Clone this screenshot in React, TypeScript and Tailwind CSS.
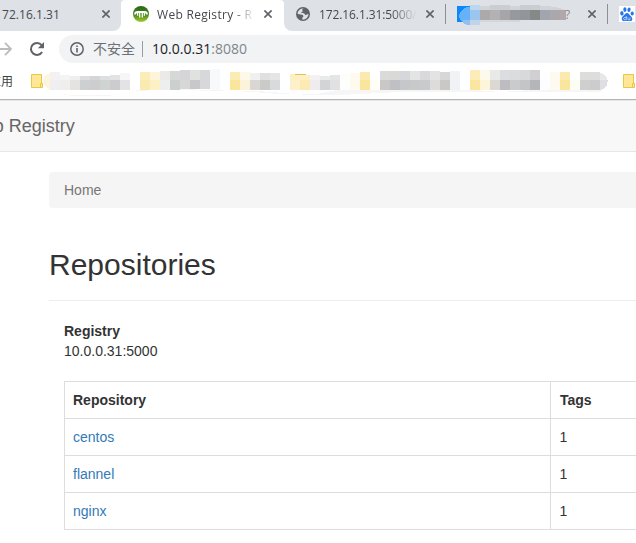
import React from "react";

type Cell = [x: number, y: number, top: string, bottom: string];

const bookmarkCells: Cell[] = [
  [50, 72, "#f4f1f2", "#efeff1"], [60, 75, "#f4f4f5", "#eeeeef"], [70, 76, "#eeeeef", "#e4e3e2"],
  [80, 76, "#dcdddf", "#cdd0d0"], [90, 76, "#d5d4d7", "#cdccce"], [100, 76, "#dde0e0", "#cfd3d2"],
  [110, 75, "#e3e2e4", "#cccbce"], [120, 73, "#f6f6f7", "#e3e3e6"],
  [140, 72, "#fbecb8", "#fbeab0"], [150, 72, "#fdf4da", "#fcf0c4"], [160, 71, "#ebeae9", "#eeeeee"],
  [170, 71, "#d6d8d8", "#cccfcf"], [180, 70, "#d5d4d7", "#d8d7d8"], [190, 70, "#e1e1e0", "#c8c7cb"],
  [200, 70, "#d6d8da", "#d6d8da"], [210, 69, "#f7f9fb", "#f8f9fa"],
  [230, 72, "#fbebb4", "#fae59d"], [240, 72, "#fdf8e8", "#fbf4da"], [250, 73, "#eff1f0", "#d9d6d4"],
  [260, 73, "#e0e0df", "#cacac8"], [270, 73, "#e5e5e6", "#d8dadc"],
  [290, 74, "#fcefc4", "#fdf0cb"], [300, 75, "#fcefc4", "#fbeab3"], [310, 75, "#f3f1f3", "#efebee"],
  [320, 76, "#e7ebea", "#d3d4d5"], [330, 75, "#e5e5e5", "#e1e1e1"], [340, 74, "#fdfdfe", "#fcfdfd"],
  [350, 73, "#fefaf0", "#fefaee"], [360, 72, "#fbe9ae", "#fae59d"], [370, 79, "#ffffff", "#fefdf6"],
  [380, 71, "#dadada", "#cac7c7"], [390, 71, "#d9d9d8", "#bfc0c4"], [400, 71, "#d6d7da", "#c6c7ca"],
  [410, 71, "#e4e4e4", "#c9c9ca"], [420, 71, "#d9d8db", "#c8cacb"], [430, 71, "#e3e3e3", "#dcdcdd"],
  [440, 72, "#d7d7d7", "#c9c8c7"], [450, 71, "#f1f2f4", "#f1f2f5"],
  [470, 70, "#fdecb9", "#fbe6a0"], [480, 70, "#fefaeb", "#fdf5da"], [490, 70, "#e9e9e8", "#dcd9d4"],
  [500, 70, "#dcdde0", "#bdbcc1"], [510, 70, "#dbdcdd", "#cbcbcc"], [520, 70, "#d8dada", "#c4c5c7"],
  [530, 70, "#d1cfd3", "#b5b6ba"], [540, 73, "#fdfeff", "#fbfdfe"], [550, 72, "#fefaf0", "#fefaf0"],
  [560, 72, "#fbe9ae", "#fae59d"], [570, 80, "#ffffff", "#fefdf5"], [580, 72, "#dddddc", "#cfcfcf"],
  [590, 72, "#dcdddc", "#cccccc"],
];

const tabCells: [number, number, string][] = [
  [480, 10, "#aca9ab"], [490, 10, "#b3b1b3"], [500, 10, "#a6a5a8"], [510, 10, "#98999d"],
  [520, 10, "#92969a"], [530, 10, "#868987"], [540, 10, "#a0a5ae"], [550, 10, "#aba7ab"], [560, 6, "#b0a8ac"],
];

function CloseIcon() {
  return (
    <svg width="8" height="8" viewBox="0 0 8 8" className="shrink-0" stroke="#5f6368" strokeWidth="1.6">
      <path d="M.4.4l7.2 7.2M7.6.4L.4 7.6" />
    </svg>
  );
}

function RegistryIcon() {
  return (
    <svg width="16" height="16" viewBox="0 0 16 16" className="shrink-0">
      <defs>
        <linearGradient id="leaf" x1="0" y1="0" x2="0" y2="1">
          <stop offset="0" stopColor="#2c6813" />
          <stop offset=".5" stopColor="#3f841b" />
          <stop offset="1" stopColor="#a9ca2c" />
        </linearGradient>
      </defs>
      <circle cx="8" cy="8" r="8" fill="url(#leaf)" />
      <path d="M2 8.500C2 6.500 3.200 6 4.500 6h7C12.800 6 14 6.500 14 8.500" fill="none" stroke="#fff" strokeWidth="1.800" />
      <path d="M4.600 6.500v3.300M6.700 6.500v5M9.300 6.500v5M11.400 6.500v3.300" fill="none" stroke="#fff" strokeWidth="1.300" />
    </svg>
  );
}

function GlobeIcon() {
  return (
    <svg width="14" height="14" viewBox="0 0 14 14" className="shrink-0">
      <circle cx="7" cy="7" r="7" fill="#5f6368" />
      <path d="M7.800 1.500c-1 .3-1.700.9-1.600 1.700.1.500.7.500.6 1.100-.1.700-1.500.5-1.500 1.300 0 .9 2.600.3 3.300 1.200.4.500.2 1.100.9 1.200.8.100.9-.8 1.700-.8h1.300A5.600 5.600 0 0 1 6.300 12.600v-1.700c0-.9 1.100-.8 1.100-1.700 0-1.500-2.200-1.600-3.300-1.700L1.500 6.700A5.600 5.600 0 0 1 7.800 1.500z" fill="#dee1e6" />
    </svg>
  );
}

function PawIcon() {
  return (
    <svg width="16" height="16" viewBox="0 0 16 16" className="shrink-0">
      <path fill="#fff" d="M0 0h16v16H0z" />
      <g fill="#2876e8">
        <ellipse cx="2.900" cy="7.300" rx="1.700" ry="2.200" transform="rotate(-12 2.900 7.300)" />
        <ellipse cx="5.900" cy="3.600" rx="1.600" ry="2.300" />
        <ellipse cx="10" cy="3.700" rx="1.600" ry="2.300" transform="rotate(10 10 3.700)" />
        <ellipse cx="13.200" cy="7.500" rx="1.600" ry="2.100" />
        <path d="M7.900 7C6.400 7 5.800 8.500 4.700 9.500c-1.300 1.200-2.300 2-1.900 3.800.4 2 2 2 3.300 1.800 1.200-.2 2.500-.2 3.700 0 1.700.3 3.300.1 3.500-1.800.2-1.700-1.100-2.500-2.100-3.700C10.200 8.300 9.400 7 7.900 7z" />
      </g>
      <path d="M7.300 10v3.800H5.800c-1.600 0-1.600-2.300 0-2.300h1.500M8.900 11.400v1.700c0 .5.200.7.700.7h1.400v-2.400" fill="none" stroke="#fff" strokeWidth=".6" />
    </svg>
  );
}

function TabMosaic() {
  return (
    <svg width="110" height="22" viewBox="457 5 110 22" className="shrink-0" shapeRendering="crispEdges">
      <path d="M457 6h16v16h-16z" fill="#0b87fb" />
      <path d="M480 6q30-1 68 0l12 2 5 2h-85z" fill="#d0d3d7" />
      <path d="M490 5h20v5h-20zM520 5h20v5h-20z" fill="#cacdd1" />
      <path d="M480 20h40v2h-40z" fill="#d3d6da" />
      <path d="M470 7h-3l-4 2-3 3-1 4 1 4 3 3 4 2h3z" fill="#66b2fa" />
      <path d="M470 5h10v5h-10z" fill="#bdd6ef" />
      <path d="M470 10h10v10h-10z" fill="#9bc5ec" />
      <path d="M463 20h7v5h-3l-4-2z" fill="#90c0f0" />
      <path d="M470 20h10v5h-10z" fill="#bfd4eb" />
      {tabCells.map(([x, w, fill]) => (
        <rect key={x} x={x} y="10" width={w} height="10" fill={fill} />
      ))}
    </svg>
  );
}

function BookmarkMosaic() {
  return (
    <svg width="566" height="31" viewBox="43 67 566 31" className="shrink-0" shapeRendering="crispEdges">
      <path d="M44 82q4 13 33 13h36q13-1 21-4l50-2 53 2 43 3h36l20-4h140l25 2 30-2h70v2H400l-60 3h-32l-50-4-120-1-10 3-20 3H75q-22-1-31-13z" fill="#f6f6f6" />
      <path d="M50 73q-7 3-7 8 1 6 7 9z" fill="#fdf4dc" />
      {bookmarkCells.map(([x, y, top, bottom]) => (
        <g key={x}>
          <rect x={x} y={y} width="10" height={80 - y} fill={top} />
          <rect x={x} y="80" width="10" height={x === 180 || x === 190 || x === 200 ? 9 : 10} fill={bottom} />
        </g>
      ))}
      <path d="M600 73l4 1 3 4v2h-7z" fill="#e7e8ea" />
      <path d="M600 80h8l-1 5-4 4-3 1z" fill="#dedfe2" />
      <path d="M295 74h11v1h-11z" fill="#e6c04a" />
    </svg>
  );
}

function FolderIcon() {
  return (
    <svg width="12" height="14" viewBox="0 0 12 14" className="shrink-0">
      <path d="M.5.5h10v9h1v4H.5z" fill="#ffe796" stroke="#eac746" />
      <path d="M9.500 13V9.500H12" fill="none" stroke="#eac746" />
    </svg>
  );
}

const uiFont = "font-['Open_Sans','Noto_Sans_CJK_SC',sans-serif]";

function TabStrip() {
  return (
    <div className={`flex h-[31px] bg-white text-[12px] leading-[28px] text-[#45494d] ${uiFont}`}>
      <div className="flex h-full w-[121px] shrink-0 rounded-br-[8px] bg-[#dee1e6] pb-[3px] pl-[2px]">
        <span className="w-[100px] pt-px tracking-[0.04px]">72.16.1.31</span>
        <span className="flex items-center"><CloseIcon /></span>
      </div>
      <div className="h-2 w-[163px] shrink-0 bg-[#dee1e6]">
        <div className="flex h-[28px] items-center rounded-t-[4px] bg-white pl-[12px]">
          <RegistryIcon />
          <span className="ml-2 w-[98px] overflow-hidden whitespace-nowrap pt-px tracking-[0.3px] [mask-image:linear-gradient(to_right,black_78%,transparent)]">
            Web Registry - R
          </span>
          <span className="ml-[9px]"><CloseIcon /></span>
        </div>
      </div>
      <div className="flex h-full flex-1 items-center rounded-bl-[8px] bg-[#dee1e6] pb-[3px] pl-[12px]">
        <GlobeIcon />
        <span className="ml-[9px] w-[98px] shrink-0 overflow-hidden whitespace-nowrap pt-px tracking-[-0.1px] [mask-image:linear-gradient(to_right,black_73%,transparent)]">
          172.16.1.31:5000/
        </span>
        <span className="ml-[9px]"><CloseIcon /></span>
        <span className="ml-[11px] h-5 w-px shrink-0 bg-[#8b8e92]" />
        <span className="ml-[11px] flex pt-[4px]"><TabMosaic /></span>
        <span className="-ml-[2px] w-[23px] shrink-0 pt-px text-[#8d8788]">?</span>
        <CloseIcon />
        <span className="ml-[11px] h-5 w-px shrink-0 bg-[#8b8e92]" />
        <span className="ml-[11px] flex"><PawIcon /></span>
      </div>
    </div>
  );
}

function Toolbar() {
  return (
    <div className={`flex h-[32px] items-end bg-white ${uiFont}`}>
      <div className="flex h-[28px] w-[59px] shrink-0 items-center">
        <svg width="12" height="14" viewBox="0 0 12 14" fill="none" stroke="#babcbe" strokeWidth="1.800">
          <path d="M0 7h10.500M5 .8L11 7l-6 6.200" />
        </svg>
        <svg width="16" height="16" viewBox="0 0 16 16" className="ml-[17px]">
          <path d="M13.100 11A6 6 0 1 1 12.600 4.100" fill="none" stroke="#5f6368" strokeWidth="2" />
          <path d="M15 1v6.200H8.800z" fill="#5f6368" />
        </svg>
      </div>
      <div className="flex h-[28px] flex-1 items-center rounded-l-full bg-[#f1f3f4] pl-[11px]">
        <svg width="14" height="14" viewBox="0 0 14 14" fill="none" stroke="#5f6368">
          <circle cx="7" cy="7" r="6.200" strokeWidth="1.500" />
          <path d="M7 6v4.500M7 3.400v1.700" strokeWidth="1.600" />
        </svg>
        <span className="ml-[9px] w-[49px] whitespace-nowrap text-[14px] leading-[28px] text-[#6c7075]">不安全</span>
        <span className="h-4 w-px bg-[#9a9c9f]" />
        <span className="ml-[9px] text-[14px] leading-[28px] tracking-[0.02px] text-[#202124]">
          10.0.0.31<span className="text-[#80868b]">:8080</span>
        </span>
      </div>
    </div>
  );
}

function BookmarksBar() {
  return (
    <div className={`flex h-[36px] items-start overflow-hidden bg-white pt-[4px] ${uiFont}`}>
      <div className="flex w-[31px] shrink-0 justify-start overflow-hidden pt-[5px]">
        <span className="-ml-[11px] whitespace-nowrap text-[12px] leading-5 text-[#3c4043]">应用</span>
      </div>
      <span className="mt-[7px] flex w-[12px] shrink-0"><FolderIcon /></span>
      <BookmarkMosaic />
      <span className="ml-[14px] mt-[7px] flex shrink-0"><FolderIcon /></span>
    </div>
  );
}

const repositories = [
  { name: "centos", tags: 1 },
  { name: "flannel", tags: 1 },
  { name: "nginx", tags: 1 },
];

export default function App() {
  return (
    <div className="h-[543px] w-[636px] overflow-hidden bg-white">
      <TabStrip />
      <Toolbar />
      <BookmarksBar />
      <div className="h-px bg-[#b3b3b3]" />
      <div className="font-['Liberation_Sans',Arial,sans-serif] text-[14px] leading-5 text-[#333]">
        <nav className="flex h-[52px] items-center overflow-hidden border-y border-[#e7e7e7] bg-[#f8f8f8]">
          <span className="-ml-[33px] whitespace-nowrap text-[18px] text-[#666]">Web Registry</span>
        </nav>
        <main className="pl-[49px] pt-[20px]">
          <div className="h-9 rounded-l-[4px] bg-[#f5f5f5] px-[15px] py-2 text-[#777]">Home</div>
          <h1 className="mt-[40px] h-[53px] border-b border-[#eee] text-[30px] leading-[33px]">Repositories</h1>
          <div className="pl-[15px] pt-[20px]">
            <div className="font-bold">Registry</div>
            <div>10.0.0.31:5000</div>
            <table className="mt-[20px] w-[700px] table-fixed border-collapse">
              <thead>
                <tr className="h-[37px] text-left">
                  <th className="w-[486px] border border-[#ddd] p-2">Repository</th>
                  <th className="border border-[#ddd] p-2 pl-[9px]">Tags</th>
                </tr>
              </thead>
              <tbody>
                {repositories.map((repo) => (
                  <tr key={repo.name} className="h-[37px]">
                    <td className="border border-[#ddd] p-2 text-[#337ab7]">{repo.name}</td>
                    <td className="border border-[#ddd] p-2 pl-[8.5px]">{repo.tags}</td>
                  </tr>
                ))}
              </tbody>
            </table>
          </div>
        </main>
      </div>
    </div>
  );
}
